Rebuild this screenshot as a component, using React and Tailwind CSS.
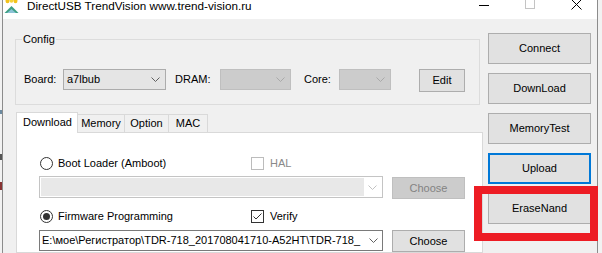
import React from 'react'

const PATH = 'E:\\мое\\Регистратор\\TDR-718_201708041710-A52HT\\TDR-718_'

function Chevron({ color = '#606060' }) {
  return (
    <svg width="9" height="5" viewBox="0 0 9 5" className="shrink-0">
      <polyline points="0.5,0.5 4.5,4.5 8.5,0.5" fill="none" stroke={color} strokeWidth="1" />
    </svg>
  )
}

function Btn({ children, className = '' }) {
  return (
    <div className={`flex items-center justify-center text-[11px] text-black ${className}`}>
      {children}
    </div>
  )
}

function AppIcon() {
  return (
    <svg width="15" height="14" viewBox="0 0 15 14">
      <ellipse cx="3.5" cy="1" rx="2" ry="2.2" fill="#f2c21b" />
      <ellipse cx="7.5" cy="0.5" rx="2" ry="2.2" fill="#f5d23a" />
      <ellipse cx="11.5" cy="1" rx="2" ry="2.2" fill="#f2c21b" />
      <polygon points="7.5,6 0.5,13 14.5,13" fill="#3d9f83" />
      <polygon points="7.5,9 3,13 12,13" fill="#8cc3d6" />
    </svg>
  )
}

function TitleBar() {
  return (
    <div className="h-[19px] bg-white flex items-start shrink-0">
      <div className="w-[24px] pl-[1px] shrink-0">
        <AppIcon />
      </div>
      <div className="text-[11.7px] leading-[14px] -mt-[1px] text-black whitespace-nowrap">
        DirectUSB TrendVision www.trend-vision.ru
      </div>
      <div className="flex-1" />
      <div className="w-[46px] flex justify-center pt-[5px] pl-[4px]">
        <div className="w-[10px] h-px bg-black" />
      </div>
      <div className="w-[46px] flex justify-center pl-[4px]">
        <div className="w-[10px] h-[10px] border border-[#c4c4c4] -mt-[1px]" />
      </div>
      <div className="w-[46px] flex justify-center pl-[4px]">
        <svg width="11" height="11" viewBox="0 0 11 11" className="-mt-[1px]">
          <path d="M0.5 0.5 L10.5 10.5 M10.5 0.5 L0.5 10.5" stroke="#000" strokeWidth="1" />
        </svg>
      </div>
    </div>
  )
}

function ConfigBox() {
  return (
    <fieldset className="mt-[13px] w-[465px] border border-[#dcdcdc] pb-[14px]">
      <legend className="ml-[6px] px-[1px] text-[11px] leading-[14px] text-black">Config</legend>
      <div className="pt-[22px] flex items-center h-[44px] text-[11px] text-black">
        <div className="w-[47px] pl-[8px] shrink-0">Board:</div>
        <div className="w-[103px] h-[21px] bg-[#e5e5e5] border border-[#acacac] flex items-center justify-between pl-[3px] pr-[5px] shrink-0">
          <span>a7lbub</span>
          <Chevron />
        </div>
        <div className="w-[54px] pl-[9px] shrink-0">DRAM:</div>
        <div className="w-[71px] h-[21px] bg-[#cccccc] border border-[#bfbfbf] flex items-center justify-end pr-[5px] shrink-0">
          <Chevron color="#a9a9a9" />
        </div>
        <div className="w-[48px] pl-[13px] shrink-0">Core:</div>
        <div className="w-[52px] h-[21px] bg-[#cccccc] border border-[#bfbfbf] flex items-center justify-end pr-[5px] shrink-0">
          <Chevron color="#a9a9a9" />
        </div>
        <Btn className="ml-[28px] w-[46px] h-[23px] mt-[2px] bg-[#e1e1e1] border border-[#adadad] shrink-0">Edit</Btn>
      </div>
    </fieldset>
  )
}

function Tabs() {
  const other = ['Memory', 'Option', 'MAC']
  const widths = ['w-[47px]', 'w-[44px]', 'w-[39px]']
  return (
    <div className="mt-[7px] ml-[1px] flex flex-col flex-1">
      <div className="flex items-end h-[20px] text-[11px] text-black">
        <div className="relative z-10 -mb-[1px] w-[62px] h-[21px] bg-white border-x border-t border-[#d9d9d9] pl-[6px] leading-[19px]">
          Download
        </div>
        {other.map((t, i) => (
          <div key={t} className={`${widths[i]} h-[18px] bg-[#f0f0f0] border-t border-r border-[#d9d9d9] flex items-center justify-center`}>
            {t}
          </div>
        ))}
      </div>
      <div className="w-[467px] flex-1 bg-white border border-[#d9d9d9] pl-[22px] pt-[24px] text-[11px] text-black">
        <div className="flex items-center h-[13px]">
          <div className="w-[212px] flex items-center shrink-0">
            <div className="ml-[1px] w-[13px] h-[13px] rounded-full border border-[#333333] bg-white" />
            <span className="ml-[5px]">Boot Loader (Amboot)</span>
          </div>
          <div className="w-[13px] h-[13px] border border-[#bcbcbc] bg-white" />
          <span className="ml-[6px] text-[#8a8a8a]">HAL</span>
        </div>

        <div className="mt-[6px] flex items-start">
          <div className="w-[344px] h-[22px] border border-[#c4c4c4] bg-white p-[1px] flex">
            <div className="flex-1 bg-[#e8e8e8]" />
            <div className="w-[17px] flex items-center justify-center">
              <Chevron color="#c2c2c2" />
            </div>
          </div>
          <Btn className="ml-[9px] mt-[1px] w-[73px] h-[22px] bg-[#cccccc] border border-[#bfbfbf] text-[#838383]">
            <span className="text-[#838383]">Choose</span>
          </Btn>
        </div>

        <div className="mt-[11px] flex items-center h-[13px]">
          <div className="w-[212px] flex items-center shrink-0">
            <div className="ml-[1px] w-[13px] h-[13px] rounded-full border border-[#333333] bg-white flex items-center justify-center">
              <div className="w-[7px] h-[7px] rounded-full bg-[#333333]" />
            </div>
            <span className="ml-[5px]">Firmware Programming</span>
          </div>
          <div className="w-[13px] h-[13px] border border-[#333333] bg-white flex items-center justify-center">
            <svg width="11" height="11" viewBox="0 0 11 11">
              <polyline points="1.5,5.5 4,8 9.5,2.5" fill="none" stroke="#333" strokeWidth="1" />
            </svg>
          </div>
          <span className="ml-[6px]">Verify</span>
        </div>

        <div className="mt-[7px] flex items-start">
          <div className="w-[344px] h-[21px] border border-[#7a7a7a] bg-white flex items-center">
            <div className="flex-1 pl-[2px] overflow-hidden whitespace-nowrap">{PATH}</div>
            <div className="w-[17px] flex items-center justify-center shrink-0">
              <Chevron />
            </div>
          </div>
          <Btn className="ml-[9px] w-[73px] h-[22px] bg-[#e1e1e1] border border-[#adadad]">Choose</Btn>
        </div>
      </div>
    </div>
  )
}

function RightButtons() {
  return (
    <div className="ml-[5px] w-[103px] flex flex-col gap-[9px] pt-[14px] shrink-0">
      <Btn className="h-[31px] bg-[#e1e1e1] border border-[#adadad]">Connect</Btn>
      <Btn className="h-[31px] bg-[#e1e1e1] border border-[#adadad]">DownLoad</Btn>
      <Btn className="h-[31px] bg-[#e1e1e1] border border-[#adadad]">MemoryTest</Btn>
      <Btn className="h-[31px] bg-[#e1e1e1] border-2 border-[#0078d7]">Upload</Btn>
      <Btn className="h-[31px] bg-[#e1e1e1] border border-[#adadad]">EraseNand</Btn>
    </div>
  )
}

export default function App() {
  return (
    <div className="w-[602px] h-[253px] overflow-hidden flex bg-[#f4f4f4] font-['Liberation_Sans',Arial,sans-serif]">
      <div className="w-[2px] shrink-0 flex flex-col bg-[#f2f2f2]">
        <div className="h-[110px]" />
        <div className="h-[4px] bg-[#6c8aa0]" />
        <div className="h-[40px]" />
        <div className="h-[6px] bg-[#555555]" />
        <div className="h-[22px]" />
        <div className="h-[8px] bg-[#883333]" />
      </div>
      <div className="relative w-[596px] shrink-0 flex flex-col border-x border-[#8c8c8c]">
        <TitleBar />
        <div className="flex-1 bg-[#f0f0f0] flex pl-[12px]">
          <div className="w-[468px] flex flex-col shrink-0">
            <ConfigBox />
            <Tabs />
          </div>
          <RightButtons />
        </div>
        <div className="absolute left-[471px] top-[186px] w-[124px] h-[55px] border-[8px] border-[#ed1c24]" />
      </div>
      <div className="flex-1 bg-[#f2f2f2]" />
    </div>
  )
}
